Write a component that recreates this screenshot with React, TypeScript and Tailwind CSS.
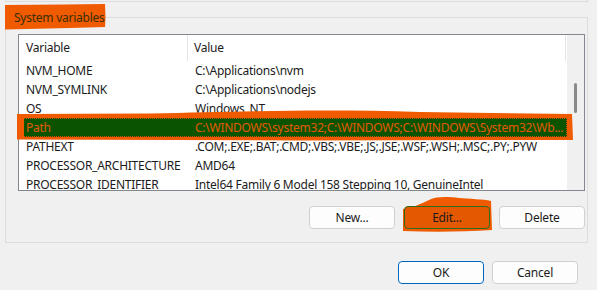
import React from "react";

const rows: [string, string][] = [
  ["NVM_HOME", "C:\\Applications\\nvm"],
  ["NVM_SYMLINK", "C:\\Applications\\nodejs"],
  ["OS", "Windows_NT"],
  ["Path", "C:\\WINDOWS\\system32;C:\\WINDOWS;C:\\WINDOWS\\System32\\Wb..."],
  ["PATHEXT", ".COM;.EXE;.BAT;.CMD;.VBS;.VBE;.JS;.JSE;.WSF;.WSH;.MSC;.PY;.PYW"],
  ["PROCESSOR_ARCHITECTURE", "AMD64"],
  ["PROCESSOR_IDENTIFIER", "Intel64 Family 6 Model 158 Stepping 10, GenuineIntel"],
];

function Btn({ children, className = "" }: { children: React.ReactNode; className?: string }) {
  return (
    <div
      className={
        "w-[86px] h-[23px] flex items-center justify-center rounded-[4px] border text-[12px] tracking-[-0.2px] leading-none text-[#1b1b1b] " +
        className
      }
    >
      {children}
    </div>
  );
}

export default function App() {
  return (
    <div className="relative w-[597px] h-[290px] overflow-hidden bg-[#f0f0f0] text-[12px] tracking-[-0.25px] leading-none text-[#1b1b1b] font-['Noto_Sans',sans-serif]">
      {/* previous group box bottom edge */}
      <div className="ml-[5px] w-[583px] h-[2px] border-x border-b border-[#dcdcdc]" />

      {/* System variables group */}
      <div className="relative mt-[15px] ml-[5px] w-[583px] h-[226px] border border-[#dcdcdc] pl-[12px] pt-[16px] flex flex-col">
        {/* legend with highlighter */}
        <div className="absolute left-[-1px] top-[-14px] w-[101px] h-[26px]">
          <svg className="absolute inset-0" width="101" height="26" viewBox="0 0 101 26">
            <path d="M0,1 L60,0.5 L100,0 L100.5,13 L100,23 L65,24 L0,25.5 Z" fill="#f05a00" />
          </svg>
          <div className="relative pl-[9px] pt-[8px] whitespace-nowrap text-[#3a3000]">System variables</div>
        </div>

        {/* list view */}
        <div className="w-[567px] h-[157px] border border-[#828790] bg-white flex overflow-hidden">
          <div className="flex-1 min-w-0 flex flex-col">
            <div className="h-[26px] shrink-0 grid grid-cols-[169px_1fr] items-center mr-[1px] border-r border-[#e5e5e5]">
              <div className="h-full flex items-center pl-[7px] border-r border-[#e5e5e5]">Variable</div>
              <div className="pl-[6px]">Value</div>
            </div>
            {rows.map(([k, v]) => {
              const sel = k === "Path";
              return (
                <div
                  key={k}
                  className={
                    "h-[19px] shrink-0 grid grid-cols-[169px_1fr] leading-[19px] whitespace-nowrap " +
                    (sel ? "bg-[#0a5300] text-[#e35a00] outline outline-1 outline-dotted outline-[#c85000] -outline-offset-1" : "")
                  }
                >
                  <div className="pl-[7px] overflow-hidden">{k}</div>
                  <div className="pl-[7px] overflow-hidden">{v}</div>
                </div>
              );
            })}
          </div>
          <div className="w-[17px] shrink-0 bg-[#f0f0f0] pt-[48px] pl-[7px]">
            <div className="w-[3px] h-[30px] rounded-full bg-[#8a8a8a]" />
          </div>
        </div>

        {/* buttons */}
        <div className="mt-[15px] w-[567px] flex justify-end gap-[9px]">
          <Btn className="bg-[#fdfdfd] border-[#d0d0d0]">New...</Btn>
          <div className="relative">
            <svg className="absolute left-[-3px] top-[-10px]" width="93" height="38" viewBox="0 0 93 38">
              <path
                d="M2,13 C10,12 20,8 28,4 C36,0 48,1 58,2 C68,3 82,3 90,5 L91,34 C60,36 30,36 2,35 Z"
                fill="#f05a00"
              />
            </svg>
            <Btn className="relative bg-[#e35800] border-[#2f6b1c]">Edit...</Btn>
          </div>
          <Btn className="bg-[#fdfdfd] border-[#d0d0d0]">Delete</Btn>
        </div>
      </div>

      {/* OK / Cancel */}
      <div className="mt-[18px] flex justify-end gap-[8px] pr-[19px]">
        <Btn className="bg-[#fdfdfd] border-[#0067c0]">OK</Btn>
        <Btn className="bg-[#fdfdfd] border-[#d0d0d0]">Cancel</Btn>
      </div>

      {/* highlighter ring around selected Path row */}
      <svg className="absolute left-0 top-0 pointer-events-none" width="597" height="290" viewBox="0 0 597 290">
        <path
          fillRule="evenodd"
          fill="#f05a00"
          d="M17,114 L150,113.5 C250,111 330,109 420,112 L572,114 L573,140 L300,140.5 L17,139.5 Z M24,118 L567,118 L567,137 L24,137 Z"
        />
      </svg>
    </div>
  );
}
